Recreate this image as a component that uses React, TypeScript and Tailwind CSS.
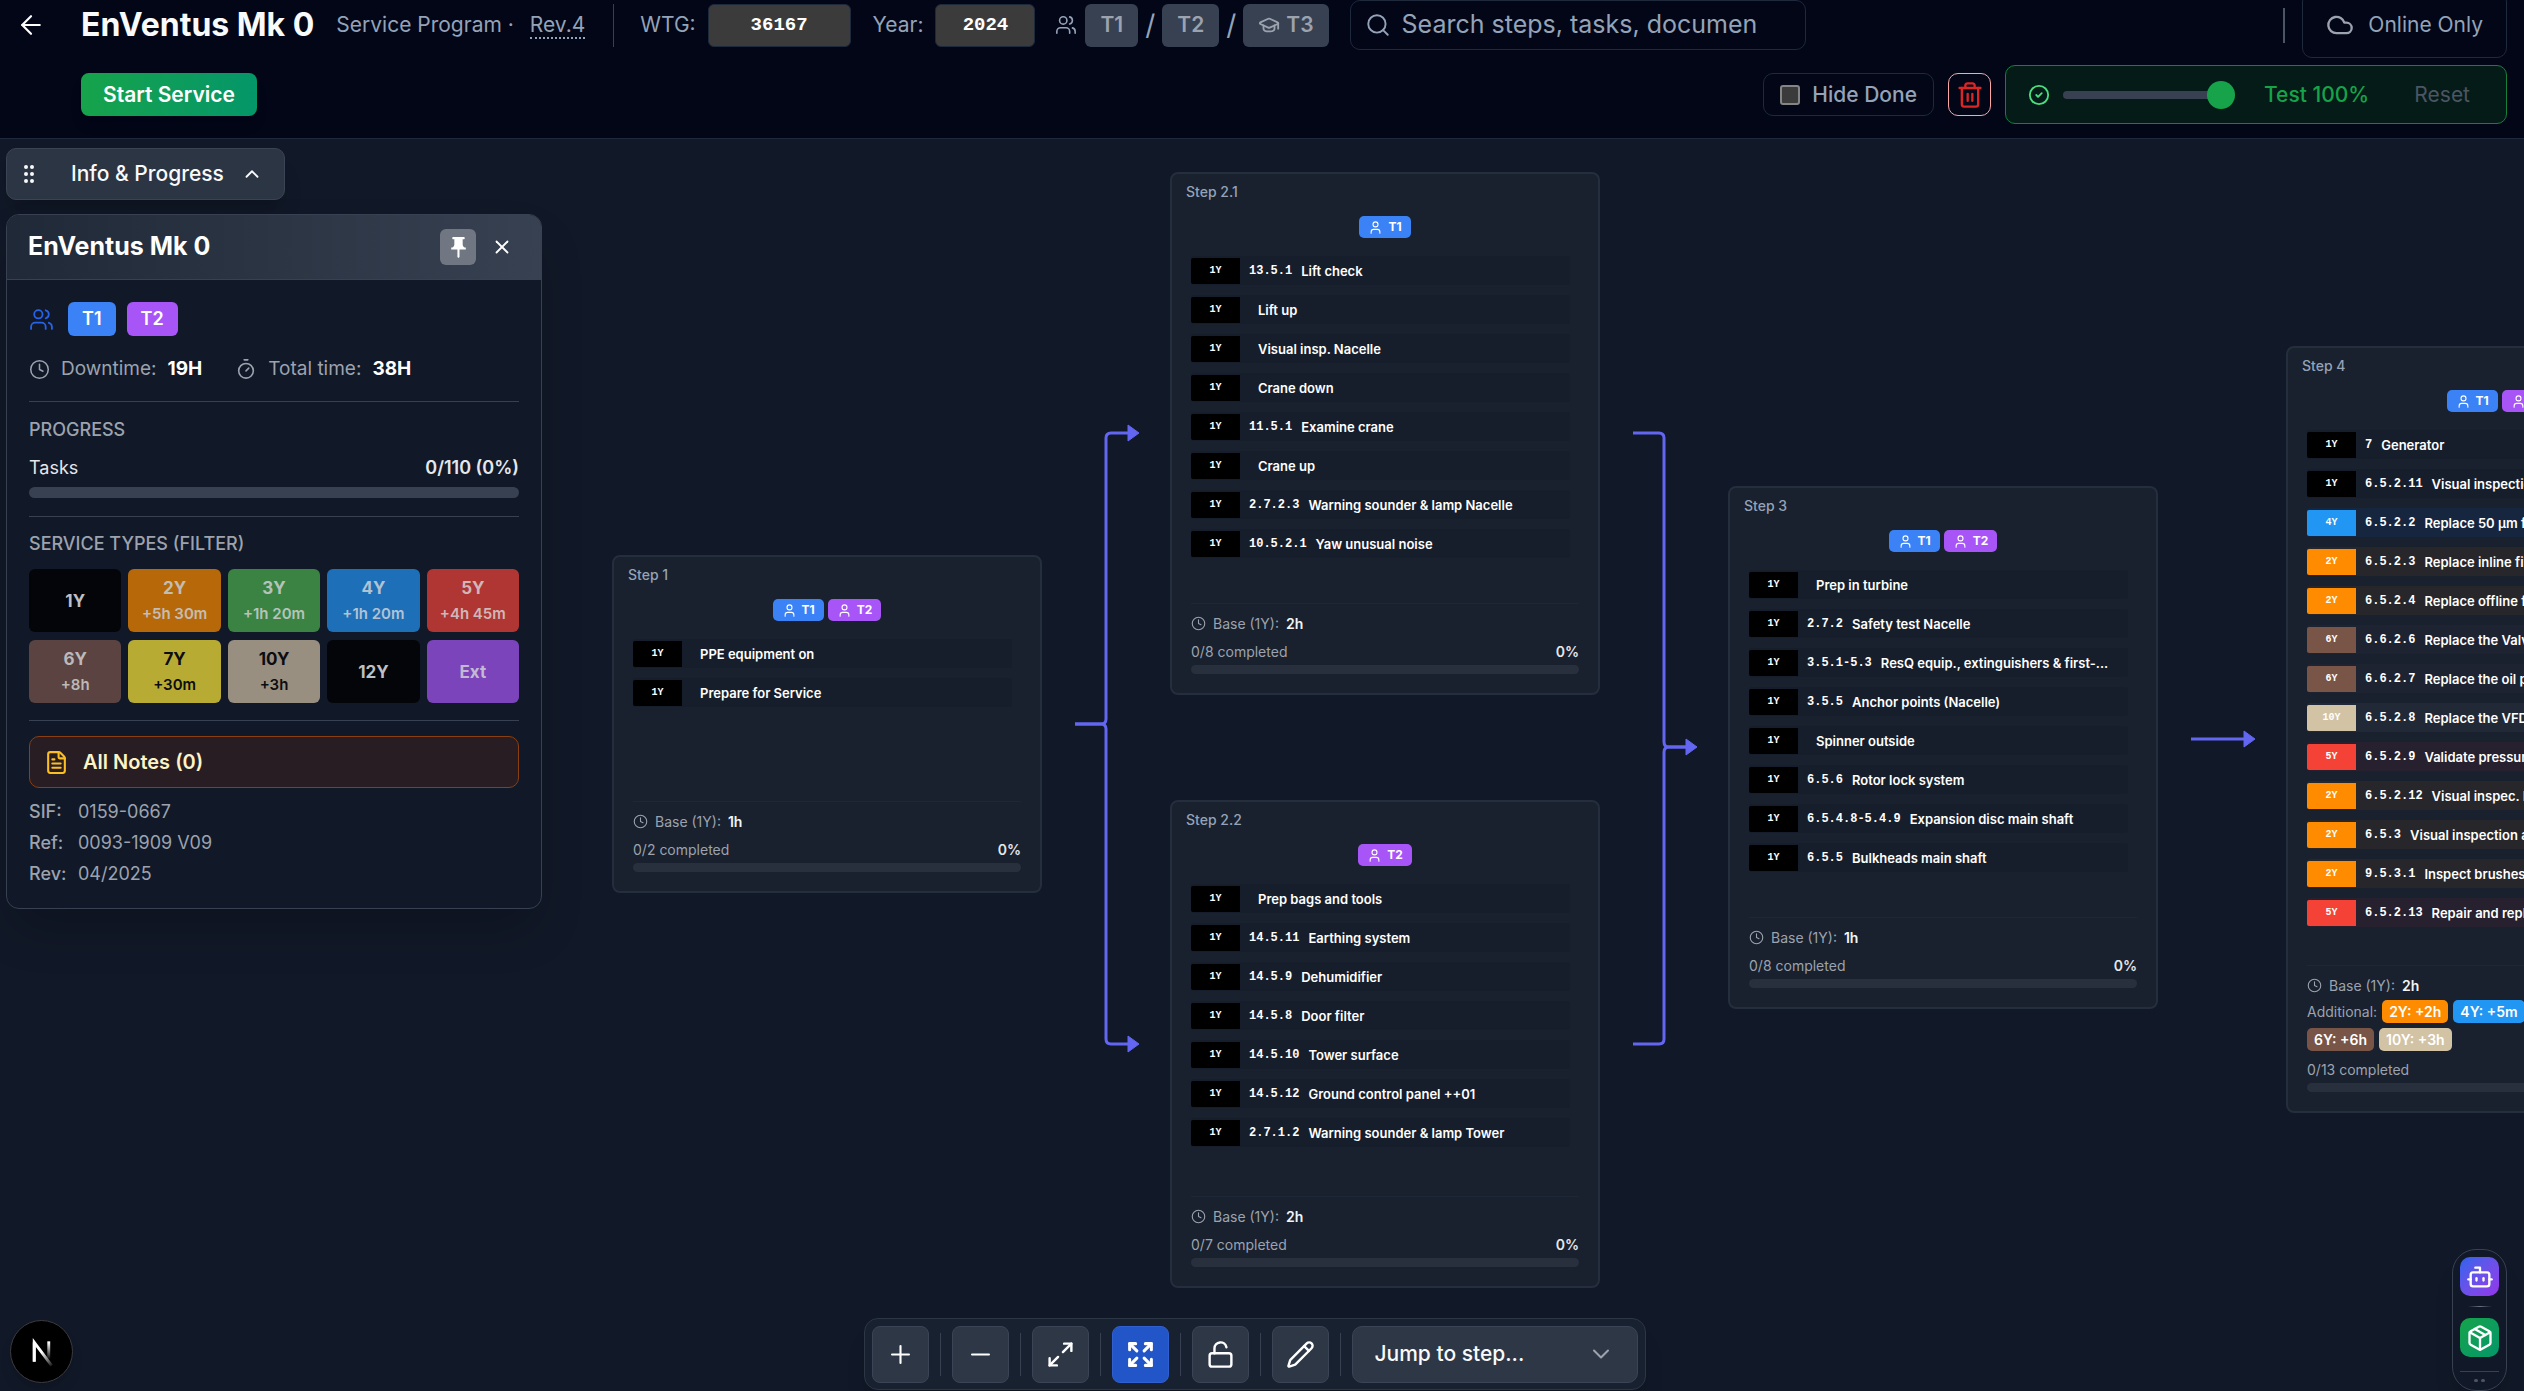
import type { CSSProperties, ReactNode } from 'react';
import {
  ArrowLeft, Bot, ChevronDown, ChevronUp, CircleCheck, Clock, Cloud, Expand, FileText,
  GraduationCap, GripVertical, LockOpen, Maximize2, Minus, Package, Pencil, Plus, Search,
  Timer, Trash2, User, Users, X,
} from 'lucide-react';
import { MdPushPin } from 'react-icons/md';

type Task = [year: string, num: string, name: string];
type Step = {
  name: string;
  x: number;
  y: number;
  h: number;
  crew: string[];
  tasks: Task[];
  base: string;
  extra?: [string, string][];
};

const STEPS: Step[] = [
  {
    name: 'Step 1', x: 612, y: 416, h: 338, crew: ['T1', 'T2'], base: '1h',
    tasks: [['1Y', '', 'PPE equipment on'], ['1Y', '', 'Prepare for Service']],
  },
  {
    name: 'Step 2.1', x: 1170, y: 33, h: 523, crew: ['T1'], base: '2h',
    tasks: [
      ['1Y', '13.5.1', 'Lift check'], ['1Y', '', 'Lift up'], ['1Y', '', 'Visual insp. Nacelle'],
      ['1Y', '', 'Crane down'], ['1Y', '11.5.1', 'Examine crane'], ['1Y', '', 'Crane up'],
      ['1Y', '2.7.2.3', 'Warning sounder & lamp Nacelle'], ['1Y', '10.5.2.1', 'Yaw unusual noise'],
    ],
  },
  {
    name: 'Step 2.2', x: 1170, y: 661, h: 488, crew: ['T2'], base: '2h',
    tasks: [
      ['1Y', '', 'Prep bags and tools'], ['1Y', '14.5.11', 'Earthing system'],
      ['1Y', '14.5.9', 'Dehumidifier'], ['1Y', '14.5.8', 'Door filter'],
      ['1Y', '14.5.10', 'Tower surface'], ['1Y', '14.5.12', 'Ground control panel ++01'],
      ['1Y', '2.7.1.2', 'Warning sounder & lamp Tower'],
    ],
  },
  {
    name: 'Step 3', x: 1728, y: 347, h: 523, crew: ['T1', 'T2'], base: '1h',
    tasks: [
      ['1Y', '', 'Prep in turbine'], ['1Y', '2.7.2', 'Safety test Nacelle'],
      ['1Y', '3.5.1-5.3', 'ResQ equip., extinguishers & first-...'],
      ['1Y', '3.5.5', 'Anchor points (Nacelle)'], ['1Y', '', 'Spinner outside'],
      ['1Y', '6.5.6', 'Rotor lock system'], ['1Y', '6.5.4.8-5.4.9', 'Expansion disc main shaft'],
      ['1Y', '6.5.5', 'Bulkheads main shaft'],
    ],
  },
  {
    name: 'Step 4', x: 2286, y: 207, h: 767, crew: ['T1', 'T2'], base: '2h',
    tasks: [
      ['1Y', '7', 'Generator'], ['1Y', '6.5.2.11', 'Visual inspection'],
      ['4Y', '6.5.2.2', 'Replace 50 µm filter'], ['2Y', '6.5.2.3', 'Replace inline filter'],
      ['2Y', '6.5.2.4', 'Replace offline filter'], ['6Y', '6.6.2.6', 'Replace the Valve'],
      ['6Y', '6.6.2.7', 'Replace the oil pump'], ['10Y', '6.5.2.8', 'Replace the VFD'],
      ['5Y', '6.5.2.9', 'Validate pressure'], ['2Y', '6.5.2.12', 'Visual inspec. HV'],
      ['2Y', '6.5.3', 'Visual inspection all'], ['2Y', '9.5.3.1', 'Inspect brushes'],
      ['5Y', '6.5.2.13', 'Repair and replace'],
    ],
    extra: [['2Y', '+2h'], ['4Y', '+5m'], ['6Y', '+6h'], ['10Y', '+3h']],
  },
];

const YEAR_BG: Record<string, string> = {
  '1Y': 'bg-black', '2Y': 'bg-[#ff8c00]', '4Y': 'bg-[#2196f3]', '5Y': 'bg-[#f44336]',
  '6Y': 'bg-[#795548]', '10Y': 'bg-[#d2c3a5]',
};
const ROW_BG: Record<string, string> = {
  '1Y': 'bg-[#171e2b]', '2Y': 'bg-[#26262b]', '4Y': 'bg-[#17263f]', '5Y': 'bg-[#26202f]',
  '6Y': 'bg-[#1e2331]', '10Y': 'bg-[#212936]',
};
const CREW_BG: Record<string, string> = { T1: 'bg-[#3b82f6]', T2: 'bg-[#a855f7]' };

const FILTERS: [string, string, string][] = [
  ['1Y', '', 'bg-[#040509] text-[#bfc0c3]'],
  ['2Y', '+5h 30m', 'bg-[#b7690a] text-[#c4bdb4]'],
  ['3Y', '+1h 20m', 'bg-[#3b8343] text-[#b5c3ba]'],
  ['4Y', '+1h 20m', 'bg-[#1d70b7] text-[#b1c2d3]'],
  ['5Y', '+4h 45m', 'bg-[#af3633] text-[#d0b6b8]'],
  ['6Y', '+8h', 'bg-[#5a4340] text-[#bdb8b9]'],
  ['7Y', '+30m', 'bg-[#b8ab33] text-[#0c0d10]'],
  ['10Y', '+3h', 'bg-[#998f80] text-[#0c0d10]'],
  ['12Y', '', 'bg-[#040509] text-[#bfc0c3]'],
  ['Ext', '', 'bg-[#7b44ba] text-[#c4b9d3]'],
];

const MONO = "font-['Liberation_Mono',monospace]";

function StepCard({ step }: { step: Step }) {
  const place: CSSProperties = { left: step.x, top: step.y, height: step.h };
  return (
    <section
      style={place}
      className="absolute flex w-[430px] flex-col rounded-lg border-2 border-[#242e3c] bg-[#19202e] px-[19px] pb-[19px] text-[14px] text-[#9ca3af]"
    >
      <h3 className="-ml-[5px] mt-2 leading-5 font-medium text-[#94a3b8]">{step.name}</h3>
      <div className="mt-[14px] flex h-[22px] justify-center gap-1">
        {step.crew.map((c) => (
          <span key={c} className={`${CREW_BG[c]} flex items-center gap-[5px] rounded-[5px] px-[9px] text-[12px] leading-4 font-bold text-white`}>
            <User size={15} strokeWidth={1.75} />
            {c}
          </span>
        ))}
      </div>
      <ul className="mt-[18px] mr-[9px] flex flex-1 flex-col gap-[10px]">
        {step.tasks.map(([year, num, name], i) => (
          <li key={i} className={`${ROW_BG[year]} flex h-[29px] items-center gap-[9px] rounded-[3px] whitespace-nowrap text-white`}>
            <span className={`${YEAR_BG[year]} ${MONO} flex h-[26px] w-[49px] shrink-0 items-center justify-center rounded-l-[2px] text-[10px] font-bold`}>
              {year}
            </span>
            <span className={`${MONO} text-[12px] leading-4 font-bold`}>{num}</span>
            <span className="text-[13px] leading-4 font-semibold">{name}</span>
          </li>
        ))}
      </ul>
      <footer className="border-t border-[#1e2735] pt-[9px]">
        <p className="flex h-5 items-center gap-[7px]">
          <Clock size={15} strokeWidth={1.75} />
          Base (1Y): <b className="font-semibold text-[#f3f4f6]">{step.base}</b>
        </p>
        {step.extra && (
          <p className="mt-[5px] flex w-[280px] flex-wrap items-center gap-x-[5px] gap-y-[5px] leading-[23px]">
            Additional:
            {step.extra.map(([y, t]) => (
              <span key={y} className={`${YEAR_BG[y]} rounded-[5px] px-[7px] font-semibold text-white`}>
                {y}: {t}
              </span>
            ))}
          </p>
        )}
        <div className="mt-2 flex h-5 items-center justify-between">
          <span>0/{step.tasks.length} completed</span>
          <b className="font-semibold text-[#e5e7eb]">0%</b>
        </div>
        <div className="mt-1 h-[9px] rounded-full bg-[#28303e]" />
      </footer>
    </section>
  );
}

function Edges() {
  return (
    <svg className="pointer-events-none absolute inset-0 h-full w-full" fill="none" stroke="#6366f1" strokeWidth="3" aria-hidden="true">
      <path d="M1075 585h26q5 0 5-5V299q0-5 5-5h17" />
      <path d="M1075 585h26q5 0 5 5v310q0 5 5 5h17" />
      <path d="M1633 294h26q5 0 5 5v304q0 5 5 5h18" />
      <path d="M1633 905h26q5 0 5-5V613q0-5 5-5h18" />
      <path d="M2191 600h53" />
      <g fill="#6366f1" strokeWidth="1">
        <path d="M1128 286l11 8-11 8z" />
        <path d="M1128 897l11 8-11 8z" />
        <path d="M1686 600l11 8-11 8z" />
        <path d="M2244 592l11 8-11 8z" />
      </g>
    </svg>
  );
}

function CrewButton({ children }: { children: ReactNode }) {
  return (
    <button className="flex h-[43px] items-center gap-[6px] rounded-md bg-[#374151] px-[15px] text-[21px] font-semibold text-[#9ca3af]">
      {children}
    </button>
  );
}

function Header() {
  return (
    <header className="flex shrink-0 flex-col gap-[15px] border-b border-[#1e293b] bg-[#020617] pr-[17px] pb-[14px] text-[21px] text-[#94a3b8]">
      <div className="flex h-[50px] items-center">
        <button aria-label="Back" className="ml-4 text-white"><ArrowLeft size={30} strokeWidth={1.75} /></button>
        <h1 className="ml-[35px] text-[32px] font-bold whitespace-nowrap text-[#f8fafc]">EnVentus Mk 0</h1>
        <p className="ml-[22px] whitespace-nowrap">
          Service Program · <a href="#rev" className="ml-[10px] border-b-2 border-dotted border-[#94a3b8]">Rev.4</a>
        </p>
        <span className="ml-[28px] h-[43px] w-px bg-[#334155]" />
        <label htmlFor="wtg" className="ml-[26px]">WTG:</label>
        <input id="wtg" defaultValue="36167" className={`${MONO} ml-3 h-[43px] w-[143px] rounded-md border border-[#1e293b] bg-[#3b3b3b] text-center text-[19px] font-bold text-white`} />
        <label htmlFor="year" className="ml-[22px]">Year:</label>
        <input id="year" defaultValue="2024" className={`${MONO} ml-3 h-[43px] w-[100px] rounded-md border border-[#1e293b] bg-[#3b3b3b] text-center text-[19px] font-bold text-white`} />
        <Users size={22} strokeWidth={1.75} className="ml-5" />
        <div className="ml-2 flex items-center gap-[7px] text-[28px]">
          <CrewButton>T1</CrewButton>/<CrewButton>T2</CrewButton>/
          <CrewButton><GraduationCap size={22} />T3</CrewButton>
        </div>
        <label className="ml-[21px] flex h-[50px] w-[456px] items-center gap-[11px] rounded-[10px] border border-[#1e293b] px-[14px]">
          <Search size={26} strokeWidth={1.75} />
          <input aria-label="Search" placeholder="Search steps, tasks, documen" className="min-w-0 flex-1 bg-transparent text-[25px] placeholder:text-[#94a3b8]" />
        </label>
        <span className="ml-auto h-[35px] w-[2px] bg-[#4b5563]" />
        <button className="ml-[17px] flex h-[66px] shrink-0 items-center gap-[14px] rounded-[10px] border border-[#1e293b] px-[23px]">
          <Cloud size={28} className="text-[#9ca3af]" />
          Online Only
        </button>
      </div>
      <div className="flex h-[59px] items-center">
        <button className="ml-[81px] h-[43px] rounded-lg bg-linear-to-r from-[#16a34a] to-[#059669] px-[22px] font-semibold text-white shadow-lg">
          Start Service
        </button>
        <label className="ml-auto flex h-[43px] items-center gap-3 rounded-[10px] border border-[#1e293b] px-4 font-medium">
          <input type="checkbox" className="size-5 appearance-none rounded-[3px] border-2 border-[#858585] bg-[#3b3b3b]" />
          Hide Done
        </label>
        <button aria-label="Delete" className="ml-[14px] flex size-[43px] items-center justify-center rounded-[10px] border border-[#fca5a5] text-[#dc2626]">
          <Trash2 size={28} />
        </button>
        <div className="ml-[14px] flex h-[59px] w-[502px] items-center rounded-[10px] border border-[#15803d] bg-[#051b17] px-[22px]">
          <CircleCheck size={22} className="text-[#4ade80]" />
          <input
            type="range" aria-label="Test progress" defaultValue={100}
            className="ml-[13px] h-2 w-[172px] appearance-none rounded-full bg-[#374151] [&::-webkit-slider-thumb]:size-7 [&::-webkit-slider-thumb]:appearance-none [&::-webkit-slider-thumb]:rounded-full [&::-webkit-slider-thumb]:bg-[#16a34a]"
          />
          <span className="ml-[29px] font-medium text-[#16a34a]">Test 100%</span>
          <button className="mr-[14px] ml-auto text-[#4b5563]">Reset</button>
        </div>
      </div>
    </header>
  );
}

function InfoPanel() {
  return (
    <aside className="absolute top-[9px] left-[6px] flex w-[536px] flex-col gap-[14px]">
      <button className="flex h-[52px] w-[279px] items-center rounded-[10px] border border-[#3a4454] bg-[#2c3544] pl-[10px] text-[21px] font-medium text-[#f9fafb] shadow-xl">
        <GripVertical size={24} />
        <span className="ml-[30px]">Info &amp; Progress</span>
        <ChevronUp size={22} className="ml-[17px]" />
      </button>
      <div className="overflow-hidden rounded-[13px] border border-[#374151] bg-[#111827] text-[18px] text-[#9ca3af] shadow-2xl">
        <div className="flex h-[65px] items-center gap-2 border-b border-[#374151] bg-linear-to-r from-[#1f2937] to-[#374151] px-[21px] text-white">
          <h2 className="text-[25px] font-bold">EnVentus Mk 0</h2>
          <button aria-label="Pin" className="ml-auto flex size-9 items-center justify-center rounded-md bg-[#717782]"><MdPushPin size={25} /></button>
          <button aria-label="Close" className="flex size-9 items-center justify-center"><X size={22} strokeWidth={2} /></button>
        </div>
        <div className="px-[22px] pt-[22px] pb-5">
          <div className="flex items-center gap-[11px] text-white">
            <Users size={25} strokeWidth={1.75} className="mr-[3px] text-[#2563eb]" />
            <span className="rounded-md bg-[#3b82f6] px-[14px] leading-[34px] font-semibold">T1</span>
            <span className="rounded-md bg-[#a855f7] px-[14px] leading-[34px] font-semibold">T2</span>
          </div>
          <div className="mt-[17px] flex h-8 items-center gap-[11px] text-[19px]">
            <Clock size={21} strokeWidth={1.75} />
            Downtime: <b className="text-white">19H</b>
            <Timer size={22} strokeWidth={1.75} className="ml-[22px]" />
            Total time: <b className="text-white">38H</b>
          </div>
          <hr className="mt-4 border-[#374151]" />
          <h4 className="mt-[14px] leading-7 font-medium">PROGRESS</h4>
          <div className="mt-[10px] flex justify-between leading-7 text-[#e5e7eb]">
            <span>Tasks</span>
            <b className="font-semibold">0/110 (0%)</b>
          </div>
          <div className="mt-[5px] h-[11px] rounded-full bg-[#374151]" />
          <hr className="mt-[18px] border-[#374151]" />
          <h4 className="mt-[13px] leading-7 font-medium">SERVICE TYPES (FILTER)</h4>
          <div className="mt-[11px] grid grid-cols-5 gap-x-[7px] gap-y-2">
            {FILTERS.map(([year, add, look]) => (
              <button key={year} className={`${look} flex h-[63px] flex-col items-center justify-center gap-[5px] rounded-md text-[17px] leading-[22px] font-bold`}>
                {year}
                {add && <span className="text-[15px] leading-5 font-semibold">{add}</span>}
              </button>
            ))}
          </div>
          <hr className="mt-[17px] border-[#374151]" />
          <button className="mt-[15px] flex h-[52px] w-full items-center gap-[14px] rounded-[10px] border border-[#8a3f12] bg-[#281d22] px-[14px] text-[20px] font-semibold text-[#fef3c7]">
            <FileText size={25} className="text-[#fbbf24]" />
            All Notes (0)
          </button>
          <dl className="mt-[10px] grid grid-cols-[49px_1fr] gap-y-[3px] leading-7">
            <dt className="font-medium">SIF:</dt><dd>0159-0667</dd>
            <dt className="font-medium">Ref:</dt><dd>0093-1909 V09</dd>
            <dt className="font-medium">Rev:</dt><dd>04/2025</dd>
          </dl>
        </div>
      </div>
    </aside>
  );
}

function Toolbar() {
  const tools: [string, ReactNode][] = [
    ['Zoom in', <Plus size={29} strokeWidth={1.75} />], ['Zoom out', <Minus size={29} strokeWidth={1.75} />],
    ['Fit', <Maximize2 size={29} />], ['Fullscreen', <Expand size={29} strokeWidth={2.5} />],
    ['Unlock', <LockOpen size={29} />], ['Edit', <Pencil size={29} />],
  ];
  return (
    <div className="pointer-events-none absolute inset-x-0 bottom-px flex justify-center pr-[15px]">
      <div className="pointer-events-auto flex h-[72px] items-center gap-[11px] rounded-[14px] border border-[#2c3645] bg-[#182130] px-[7px] shadow-xl">
        {tools.map(([label, icon]) => (
          <div key={label} className="flex items-center gap-[11px]">
            <button
              aria-label={label}
              className={`flex size-[57px] items-center justify-center rounded-lg border text-white ${label === 'Fullscreen' ? 'border-[#2f5fd0] bg-[#2255c8]' : 'border-[#3a4454] bg-[#2e3746]'}`}
            >
              {icon}
            </button>
            <span className="h-[43px] w-px bg-[#374151]" />
          </div>
        ))}
        <button className="flex h-[57px] w-[286px] items-center justify-between rounded-[10px] border border-[#3a4454] bg-[#2e3746] px-[22px] text-[21px] font-medium text-[#f9fafb]">
          Jump to step...
          <ChevronDown size={28} strokeWidth={1.75} className="text-[#9ca3af]" />
        </button>
      </div>
    </div>
  );
}

function Dock() {
  return (
    <div className="absolute right-[17px] bottom-0 flex w-[55px] flex-col items-center rounded-[24px] border border-[#374151] bg-[#111827] pt-[7px] pb-2 shadow-xl">
      <button aria-label="Assistant" className="flex size-[39px] items-center justify-center rounded-[10px] bg-linear-to-br from-[#2563eb] to-[#9333ea] text-white"><Bot size={28} /></button>
      <span className="mt-[10px] h-px w-6 bg-linear-to-r from-transparent via-[#6b7280] to-transparent" />
      <button aria-label="Packages" className="mt-[11px] flex size-[39px] items-center justify-center rounded-[10px] bg-linear-to-br from-[#16a34a] to-[#059669] text-white"><Package size={28} /></button>
      <span className="mt-[14px] h-px w-[39px] bg-[#374151]" />
      <span className="mt-[7px] flex gap-[3px]">
        <i className="h-[3px] w-1 rounded-full bg-[#4b5563]" />
        <i className="h-[3px] w-1 rounded-full bg-[#4b5563]" />
      </span>
    </div>
  );
}

function NextBadge() {
  return (
    <button aria-label="Dev tools" className="absolute bottom-2 left-[10px] size-[63px] rounded-full border border-[#3c3c40] bg-black shadow-lg">
      <svg viewBox="0 0 63 63" fill="none" aria-hidden="true">
        <defs>
          <linearGradient id="fadeA" x1="32" y1="32" x2="44" y2="47" gradientUnits="userSpaceOnUse">
            <stop stopColor="#fff" /><stop offset="1" stopColor="#fff" stopOpacity="0" />
          </linearGradient>
          <linearGradient id="fadeB" x1="40" y1="22" x2="40" y2="40" gradientUnits="userSpaceOnUse">
            <stop stopColor="#fff" /><stop offset="1" stopColor="#fff" stopOpacity="0" />
          </linearGradient>
        </defs>
        <path d="M24 42V22L42 46" stroke="url(#fadeA)" strokeWidth="3" />
        <path d="M24 42V22" stroke="#fff" strokeWidth="3" />
        <path d="M39 21V39" stroke="url(#fadeB)" strokeWidth="3" />
      </svg>
    </button>
  );
}

export default function App() {
  return (
    <div className="flex h-screen flex-col overflow-hidden bg-[#111827] font-[Inter,sans-serif]">
      <Header />
      <main className="relative flex-1 overflow-hidden">
        <Edges />
        {STEPS.map((s) => <StepCard key={s.name} step={s} />)}
        <InfoPanel />
        <Toolbar />
        <Dock />
        <NextBadge />
      </main>
    </div>
  );
}
